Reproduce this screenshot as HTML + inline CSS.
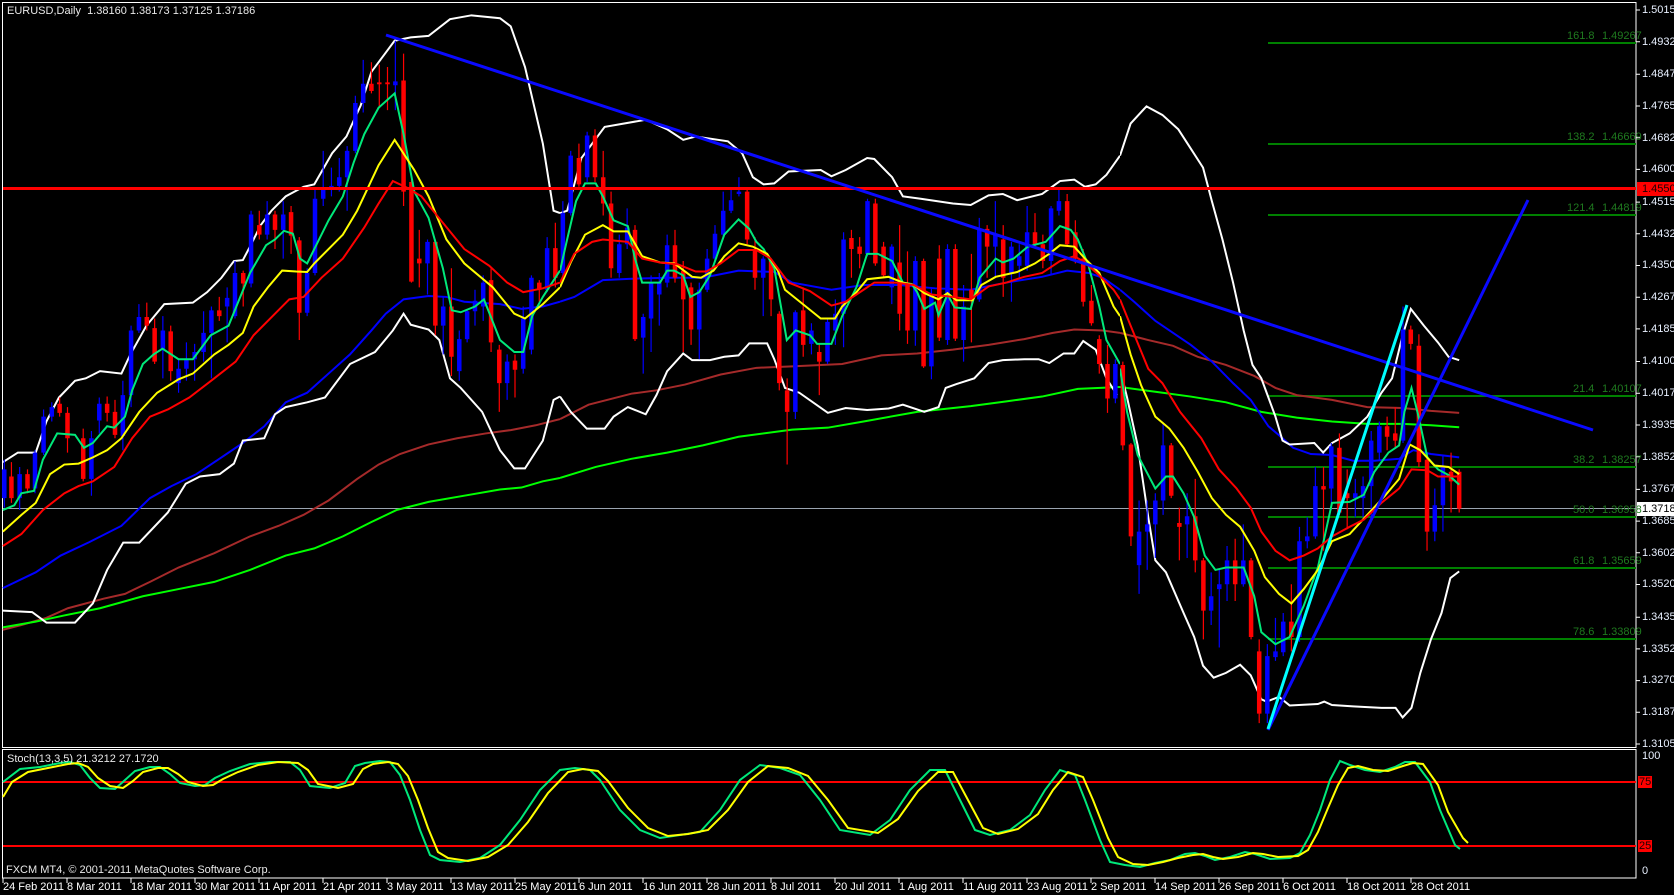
<!DOCTYPE html>
<html><head><meta charset="utf-8"><style>
html,body{margin:0;padding:0;background:#000;width:1674px;height:895px;overflow:hidden}
.t{position:absolute;font-family:"Liberation Sans",sans-serif;font-size:11px;color:#fff;white-space:nowrap;line-height:12px}
.ax{position:absolute;left:1642px;font-family:"Liberation Sans",sans-serif;font-size:11px;color:#e8f0ff;line-height:12px}
.fib{position:absolute;font-family:"Liberation Sans",sans-serif;font-size:11px;color:#1f7a1f;line-height:12px}
.d{position:absolute;top:881px;font-family:"Liberation Sans",sans-serif;font-size:11px;color:#fff;white-space:nowrap;line-height:12px}
</style></head><body>
<svg width="1674" height="895" style="position:absolute;left:0;top:0" xmlns="http://www.w3.org/2000/svg">
<rect width="1674" height="895" fill="#000"/>
<!-- frames -->
<rect x="2.5" y="2.5" width="1633.5" height="745" fill="none" stroke="#fff" stroke-width="1"/>
<rect x="2.5" y="749.5" width="1633.5" height="128.5" fill="none" stroke="#fff" stroke-width="1"/>
<!-- gray current price line -->
<line x1="3" y1="508.5" x2="1636" y2="508.5" stroke="#9aa4b0" stroke-width="1"/>
<!-- fib lines -->
<g stroke="#008000" stroke-width="2">
<line x1="1268" y1="43" x2="1636" y2="43"/><line x1="1268" y1="144" x2="1636" y2="144"/>
<line x1="1268" y1="215" x2="1636" y2="215"/><line x1="1268" y1="396" x2="1636" y2="396"/>
<line x1="1268" y1="467" x2="1636" y2="467"/><line x1="1268" y1="517" x2="1636" y2="517"/>
<line x1="1268" y1="568" x2="1636" y2="568"/><line x1="1268" y1="639" x2="1636" y2="639"/>
</g>

<!-- Panel A -->
<svg x="0" y="0" width="560" height="750" viewBox="0 0 1568 1566" preserveAspectRatio="none">
<g fill="none" vector-effect="non-scaling-stroke">
<path vector-effect="non-scaling-stroke" stroke="#a52a2a" stroke-width="2" fill="none" d="M8 1315L60 1305 130 1290 190 1270 290 1250 350 1240 420 1215 500 1185 600 1155 700 1120 780 1098 850 1075 920 1045 1000 1000 1060 970 1120 948 1200 928 1280 915 1360 905 1430 898 1500 888 1568 875"/>
<path vector-effect="non-scaling-stroke" stroke="#00ff00" stroke-width="2" fill="none" d="M8 1310L100 1298 180 1285 280 1270 400 1245 500 1230 600 1215 700 1190 800 1160 880 1145 960 1120 1040 1090 1110 1065 1200 1048 1300 1035 1400 1022 1460 1018 1520 1005 1568 998"/>
<path vector-effect="non-scaling-stroke" stroke="#0000ff" stroke-width="2" fill="none" d="M8 1228L100 1195 170 1160 250 1132 340 1098 420 1040 480 1015 550 990 610 960 680 925 740 890 800 840 860 820 920 780 980 740 1040 690 1080 655 1130 625 1200 618 1250 620 1300 630 1400 635 1460 645 1520 640 1568 630"/>
<path vector-effect="non-scaling-stroke" stroke="#fff" stroke-width="2" fill="none" d="M8 965L50 945 100 945 130 880 165 830 210 795 240 790 280 775 340 780 365 740 410 680 460 635 540 632 580 610 620 580 655 545 680 543 700 515 730 470 760 440 800 410 850 390 880 385 930 320 970 285 1010 220 1040 150 1080 110 1105 85 1150 78 1200 75 1260 40 1320 32 1400 38 1430 55 1470 140 1520 300 1550 440 1568 445"/>
<path vector-effect="non-scaling-stroke" stroke="#fff" stroke-width="2" fill="none" d="M8 1275L90 1278 130 1300 210 1300 260 1260 300 1190 345 1133 390 1133 470 1070 520 1010 560 995 615 990 655 968 680 920 740 915 770 865 800 850 860 840 910 830 940 800 980 760 1050 735 1100 690 1130 655 1150 678 1200 688 1230 710 1260 790 1290 810 1350 860 1400 940 1440 978 1470 978 1520 920 1550 835 1568 828"/>
</g>
<path vector-effect="non-scaling-stroke" stroke="#0000ff" stroke-width="1.2" d="M12 960V1060M55 975V1065M98 940V1030M122 855V950M145 840V880M256 900V1035M278 830V905M344 795V940M367 680V850M389 635V695M456 660V790M500 750V820M522 715V795M545 718V795M570 650V755M592 640V790M636 600V715M658 545V665M703 440V600M748 420V500M793 420V540M860 560V660M882 395V575M905 315V430M928 350V410M950 330V400M972 305V440M995 200V320M1017 125V235M1107 85V230M1197 500V615M1241 620V740M1286 690V795M1308 645V715M1330 605V680M1353 575V670M1420 740V835M1465 640V780M1488 575V740M1532 495V610"/>
<path vector-effect="non-scaling-stroke" stroke="#0000ff" stroke-width="4.5" d="M12 980V1040M55 990V1040M98 945V1020M122 870V945M145 850V870M256 915V1000M278 843V878M344 825V910M367 690V825M389 662V690M456 690V730M500 770V800M522 752V770M545 735V750M570 695V735M592 648V695M636 622V640M658 570V660M703 448V592M748 448V490M793 448V480M860 570V653M882 415V570M905 395V415M928 388V395M950 370V388M972 315V370M995 215V315M1017 175V215M1107 170V178M1197 505V550M1241 640V680M1286 708V775M1308 650V708M1330 628V650M1353 590V640M1420 755V800M1465 665V770M1488 580V730M1532 518V605"/>
<path vector-effect="non-scaling-stroke" stroke="#ff0000" stroke-width="1.2" d="M32 965V1050M77 980V1030M167 830V870M189 850V945M233 895V1005M300 828V880M322 835V915M411 632V690M433 665V760M478 680V795M614 620V670M681 565V640M726 440V500M770 440V520M815 430V530M838 495V710M1040 130V195M1062 135V225M1085 140V230M1130 112V430M1152 375V590M1174 480V600M1219 500V700M1264 560V785M1375 560V735M1398 720V860M1442 740V830M1510 585V630M1555 465V600"/>
<path vector-effect="non-scaling-stroke" stroke="#ff0000" stroke-width="4.5" d="M32 995V1040M77 990V1020M167 843V862M189 862V915M233 915V1000M300 843V862M322 860V908M411 662V680M433 685V755M478 692V775M614 648V660M681 570V592M726 470V490M770 448V480M815 443V492M838 502V653M1040 175V190M1062 172V176M1085 172V176M1130 168V400M1152 380V588M1174 540V550M1219 505V680M1264 640V745M1375 585V715M1398 730V800M1442 753V772M1510 590V605M1555 518V580"/>
<path vector-effect="non-scaling-stroke" stroke="#00e87a" stroke-width="2" fill="none" d="M8 1065L40 1055 60 1030 95 1025 120 960 160 905 210 908 235 935 260 925 300 890 320 893 350 870 370 815 400 760 430 740 455 728 500 750 540 750 590 700 640 680 700 570 745 512 770 500 795 482 820 488 840 540 860 550 880 520 920 460 960 410 990 340 1020 280 1060 225 1105 195 1130 280 1160 400 1200 455 1240 560 1265 648 1290 652 1330 640 1355 625 1400 710 1440 735 1465 735 1490 660 1520 620 1568 565"/>
<path vector-effect="non-scaling-stroke" stroke="#ffff00" stroke-width="2" fill="none" d="M8 1110L60 1075 100 1050 140 990 180 970 220 968 260 955 300 940 340 915 390 860 440 820 500 792 540 780 600 740 640 720 680 695 710 640 750 600 790 565 830 567 860 568 880 550 920 520 960 490 1000 440 1060 345 1105 292 1160 355 1200 410 1250 500 1300 550 1380 600 1440 655 1470 665 1520 635 1568 600"/>
<path vector-effect="non-scaling-stroke" stroke="#ff0000" stroke-width="2" fill="none" d="M8 1140L60 1115 120 1065 180 1030 220 1015 260 1005 320 975 370 915 420 870 470 855 530 830 600 790 660 755 710 700 770 655 810 625 850 620 900 580 960 540 1020 475 1060 425 1100 378 1140 392 1180 410 1240 465 1300 520 1370 555 1420 590 1465 610 1520 602 1568 590"/>
</svg>

<!-- Panel B -->
<svg x="560" y="0" width="560" height="750" viewBox="0 0 1568 1566" preserveAspectRatio="none">
<path vector-effect="non-scaling-stroke" stroke="#a52a2a" stroke-width="2" fill="none" d="M0 875L80 845 200 822 270 815 350 803 450 782 550 768 650 765 790 760 900 742 1000 738 1100 730 1200 720 1300 708 1380 695 1440 688 1520 690 1568 695"/>
<path vector-effect="non-scaling-stroke" stroke="#00ff00" stroke-width="2" fill="none" d="M0 998L100 975 200 958 300 945 400 930 500 912 650 897 750 893 850 880 1000 860 1150 848 1250 838 1350 828 1450 812 1568 808"/>
<path vector-effect="non-scaling-stroke" stroke="#0000ff" stroke-width="2" fill="none" d="M0 630L40 620 120 585 200 582 300 580 400 580 500 565 600 568 650 590 760 605 850 595 950 595 1050 602 1150 605 1250 590 1350 578 1420 565 1480 570 1520 580 1568 605"/>
<path vector-effect="non-scaling-stroke" stroke="#fff" stroke-width="2" fill="none" d="M0 445L20 440 60 330 125 265 240 250 300 270 345 292 380 285 470 295 510 320 540 370 570 385 600 383 640 358 730 355 760 368 800 355 860 330 880 332 930 370 960 410 1010 415 1100 425 1150 428 1200 408 1240 405 1280 418 1350 405 1400 378 1440 375 1470 390 1500 385 1530 365 1568 325"/>
<path vector-effect="non-scaling-stroke" stroke="#fff" stroke-width="2" fill="none" d="M0 828L30 860 75 895 125 895 150 870 190 850 240 865 270 825 300 775 345 738 370 752 420 752 460 745 500 742 530 717 580 717 600 750 630 810 670 820 750 862 800 852 860 856 920 853 960 845 1020 860 1060 850 1080 810 1110 802 1160 790 1200 758 1240 752 1300 750 1340 750 1370 758 1410 738 1440 738 1465 712 1500 730 1530 790 1560 825"/>
<path vector-effect="non-scaling-stroke" stroke="#0000ff" stroke-width="1.2" d="M8 420V580M30 315V450M76 275V380M166 490V580M188 435V520M233 655V780M255 575V735M278 570V680M300 490V600M390 590V750M412 520V610M434 470V545M457 400V495M479 395V445M501 370V410M569 535V660M659 648V875M704 675V740M749 665V760M771 625V720M794 485V725M861 415V535M929 510V635M995 535V722M1040 600V792M1085 510V720M1130 595V755M1174 455V630M1219 420V580M1264 505V630M1286 510V580M1308 430V565M1375 430V575M1397 395V450M1555 750V842"/>
<path vector-effect="non-scaling-stroke" stroke="#0000ff" stroke-width="4.5" d="M8 445V570M30 325V445M76 283V370M166 510V570M188 475V510M233 662V705M255 590V665M278 590V615M300 512V590M390 605V688M412 540V605M434 488V540M457 440V490M479 418V440M501 400V405M569 540V580M659 652V860M704 690V718M749 672V755M771 655V690M794 500V655M861 420V530M929 515V600M995 545V690M1040 615V765M1085 520V710M1130 640V710M1174 478V625M1219 490V515M1264 515V570M1286 535V555M1308 485V555M1375 435V545M1397 420V440M1555 760V832"/>
<path vector-effect="non-scaling-stroke" stroke="#ff0000" stroke-width="1.2" d="M53 300V390M98 270V380M121 315V450M143 400V580M210 470V712M322 480V590M345 545V735M367 590V720M524 395V510M546 495V605M591 540V660M614 650V815M636 790V970M681 600V745M726 718V825M816 480V580M839 495V560M883 415V555M906 505V580M951 470V690M973 525V718M1018 540V768M1062 512V712M1107 510V712M1152 530V715M1196 470V580M1241 470V620M1330 445V515M1352 490V560M1420 405V515M1443 460V550M1465 520V640M1488 595V680M1510 700V780M1533 720V862"/>
<path vector-effect="non-scaling-stroke" stroke="#ff0000" stroke-width="4.5" d="M53 330V385M98 283V370M121 370V425M143 425V560M210 480V708M322 512V580M345 565V625M367 600V688M524 400V500M546 520V580M591 545V625M614 655V800M636 815V860M681 648V720M726 735V755M816 497V520M839 515V530M883 425V550M906 515V575M951 548V655M973 590V690M1018 545V765M1062 540V705M1107 520V707M1152 605V625M1196 478V515M1241 500V580M1330 485V510M1352 510V545M1420 420V510M1443 485V540M1465 540V630M1488 628V675M1510 708V760M1533 760V832"/>
<path vector-effect="non-scaling-stroke" stroke="#00e87a" stroke-width="2" fill="none" d="M0 565L20 500 45 420 70 383 100 383 120 410 150 460 190 472 210 540 230 590 280 590 300 565 320 565 345 575 365 620 390 610 420 575 460 490 500 458 530 478 550 505 570 520 600 560 635 710 660 690 700 700 720 718 760 718 790 660 830 600 860 530 890 530 930 545 960 590 985 593 1000 610 1020 645 1050 632 1060 658 1085 615 1105 642 1150 645 1175 580 1220 540 1240 548 1270 540 1310 515 1360 505 1400 472 1430 480 1450 500 1480 555 1510 640 1530 710 1568 760"/>
<path vector-effect="non-scaling-stroke" stroke="#ffff00" stroke-width="2" fill="none" d="M0 600L30 548 70 490 120 470 150 483 190 483 230 535 280 548 320 550 370 578 395 580 430 565 460 535 500 508 540 515 580 530 610 565 630 605 680 635 730 665 770 665 790 640 830 610 860 583 920 578 960 590 990 595 1020 612 1060 625 1085 612 1110 627 1155 627 1180 595 1220 578 1280 568 1330 550 1370 530 1400 512 1440 515 1470 540 1510 570 1550 640 1568 660"/>
<path vector-effect="non-scaling-stroke" stroke="#ff0000" stroke-width="2" fill="none" d="M0 590L40 530 90 505 120 500 190 505 230 540 280 548 330 552 380 567 410 567 450 550 500 522 550 522 590 540 640 590 700 608 760 638 800 630 850 605 880 590 940 590 990 595 1040 615 1100 620 1150 625 1200 598 1250 590 1300 578 1350 570 1400 545 1440 535 1470 548 1510 575 1550 605 1568 625"/>
</svg>

<!-- Panel C -->
<svg x="1120" y="0" width="554" height="750" viewBox="0 0 1568 1566" preserveAspectRatio="none">
<path vector-effect="non-scaling-stroke" stroke="#a52a2a" stroke-width="2" fill="none" d="M0 695L80 710 150 722 220 745 300 762 380 785 440 810 500 825 600 835 700 850 800 852 880 858 960 862"/>
<path vector-effect="non-scaling-stroke" stroke="#00ff00" stroke-width="2" fill="none" d="M0 808L100 818 200 828 300 840 400 860 500 872 600 880 700 885 800 885 880 888 960 892"/>
<path vector-effect="non-scaling-stroke" stroke="#0000ff" stroke-width="2" fill="none" d="M0 605L40 630 100 670 140 690 200 720 260 755 320 800 370 835 420 890 460 915 490 935 540 948 600 950 660 962 720 962 790 958 830 940 880 948 960 955"/>
<path vector-effect="non-scaling-stroke" stroke="#fff" stroke-width="2" fill="none" d="M0 325L30 258 75 222 120 240 165 270 200 310 235 350 260 420 290 500 320 590 350 690 375 762 400 790 420 830 440 870 460 920 480 928 550 925 575 945 600 925 650 905 700 870 740 820 770 790 800 700 823 645 860 680 900 715 930 745 960 752"/>
<path vector-effect="non-scaling-stroke" stroke="#fff" stroke-width="2" fill="none" d="M0 770L20 830 50 930 80 1080 100 1170 130 1195 180 1280 210 1330 235 1390 265 1415 300 1405 340 1388 370 1410 400 1460 415 1465 450 1455 480 1473 560 1470 578 1465 600 1472 660 1475 740 1478 780 1478 800 1498 825 1478 850 1405 880 1335 910 1280 935 1207 960 1193"/>
<path vector-effect="non-scaling-stroke" stroke="#0000ff" stroke-width="1.2" d="M54 1045V1240M77 1045V1190M100 1030V1165M122 885V1075M190 1030V1165M258 1195V1305M281 1190V1352M303 1140V1255M349 1095V1225M417 1345V1510M440 1290V1380M462 1280V1370M508 1100V1340M530 1080V1145M553 975V1125M598 925V1065M666 1000V1080M688 995V1080M711 900V1080M734 880V960M801 640V925M891 1020V1130M914 950V1110"/>
<path vector-effect="non-scaling-stroke" stroke="#0000ff" stroke-width="4.5" d="M54 1110V1180M77 1095V1110M100 1045V1095M122 930V1045M190 1078V1095M258 1245V1275M281 1220V1230M303 1170V1220M349 1170V1220M417 1370V1490M440 1360V1372M462 1298V1362M508 1130V1330M530 1120V1130M553 1015V1120M598 932V1020M666 1030V1040M688 1015V1040M711 920V1015M734 890V945M801 688V920M891 1055V1110M914 975V1055"/>
<path vector-effect="non-scaling-stroke" stroke="#ff0000" stroke-width="1.2" d="M8 755V940M31 925V1140M145 925V1040M168 1060V1170M213 1000V1195M236 1165V1335M326 1125V1255M371 1165V1335M394 1335V1510M485 1220V1360M576 975V1150M621 905V1075M643 980V1105M756 870V940M779 850V935M823 680V730M846 698V975M869 955V1150M937 945V1070M960 980V1070"/>
<path vector-effect="non-scaling-stroke" stroke="#ff0000" stroke-width="4.5" d="M8 762V930M31 928V1120M145 930V1035M168 1092V1100M213 1078V1170M236 1170V1275M326 1170V1220M371 1170V1330M394 1360V1490M485 1298V1330M576 1015V1022M621 935V1070M643 1030V1040M756 890V912M779 905V920M823 688V718M846 722V965M869 960V1110M937 985V1005M960 985V1062"/>
<path vector-effect="non-scaling-stroke" stroke="#00e87a" stroke-width="2" fill="none" d="M0 770L20 860 50 950 100 1020 130 995 150 995 180 1030 210 1080 240 1160 270 1190 300 1185 350 1185 380 1245 400 1320 440 1345 480 1330 520 1265 560 1185 600 1050 650 1048 690 1033 720 985 760 945 790 930 805 860 825 810 845 870 870 955 900 980 930 992 960 1012"/>
<path vector-effect="non-scaling-stroke" stroke="#ffff00" stroke-width="2" fill="none" d="M0 660L30 740 60 805 100 870 140 895 180 935 220 985 260 1040 300 1075 340 1100 380 1150 410 1205 450 1240 485 1260 520 1230 560 1190 600 1130 650 1115 700 1075 750 1035 790 1000 820 928 850 940 890 972 930 975 960 990"/>
<path vector-effect="non-scaling-stroke" stroke="#ff0000" stroke-width="2" fill="none" d="M0 625L30 680 80 770 120 800 170 860 230 915 280 980 330 1020 370 1060 400 1110 440 1150 480 1170 520 1160 560 1145 600 1120 650 1100 690 1085 740 1050 790 1020 825 980 870 982 900 995 930 995 960 995"/>
</svg>

<!-- red horizontal line -->
<line x1="3" y1="188.5" x2="1636" y2="188.5" stroke="#ff0000" stroke-width="3"/>
<!-- trendlines -->
<line x1="386" y1="35" x2="1593" y2="430" stroke="#0a0aff" stroke-width="3"/>
<line x1="1268" y1="730" x2="1528" y2="200" stroke="#0a0aff" stroke-width="3"/>
<line x1="1268" y1="729" x2="1407" y2="305" stroke="#00ffff" stroke-width="3"/>

<!-- axis ticks -->
<g stroke="#fff" stroke-width="1">
<path d="M1636 10h4M1636 41.7h4M1636 74.3h4M1636 106h4M1636 137.7h4M1636 169.4h4M1636 202.1h4M1636 233.8h4M1636 265.5h4M1636 297.2h4M1636 328.9h4M1636 361.5h4M1636 393.3h4M1636 425h4M1636 456.7h4M1636 489.4h4M1636 521.1h4M1636 552.8h4M1636 584.5h4M1636 617.2h4M1636 648.9h4M1636 680.6h4M1636 712.3h4M1636 744h4"/>
<path d="M3 878v5M67 878v5M131 878v5M195 878v5M259 878v5M323 878v5M387 878v5M451 878v5M515 878v5M579 878v5M643 878v5M707 878v5M771 878v5M835 878v5M899 878v5M963 878v5M1027 878v5M1091 878v5M1155 878v5M1219 878v5M1283 878v5M1347 878v5M1411 878v5"/>
</g>

<!-- stoch -->
<line x1="3" y1="782" x2="1636" y2="782" stroke="#ff0000" stroke-width="2"/>
<line x1="3" y1="846" x2="1636" y2="846" stroke="#ff0000" stroke-width="2"/>
<polyline fill="none" stroke="#00e87a" stroke-width="2" points="3,782 20,769 40,767 60,763 70,762 80,765 90,778 100,788 115,789 125,780 135,771 150,767 160,767 170,774 180,783 195,786 205,785 215,778 230,771 250,764 270,762 290,762 300,770 310,786 330,788 345,783 355,766 365,763 380,761 390,762 400,775 410,800 420,830 430,855 440,860 460,862 480,858 500,845 520,820 540,790 560,770 575,768 590,770 600,780 620,810 640,830 660,838 680,835 700,832 720,810 740,780 760,765 780,768 800,775 820,800 840,830 870,835 890,820 910,790 930,770 945,770 960,800 975,830 990,835 1010,830 1030,815 1045,790 1060,770 1075,775 1085,800 1100,840 1110,862 1125,865 1140,867 1155,863 1170,860 1185,854 1195,853 1205,856 1215,860 1230,857 1245,852 1255,854 1270,859 1290,858 1300,853 1310,835 1320,810 1330,780 1340,761 1350,765 1365,770 1380,772 1395,767 1405,762 1415,762 1430,782 1440,810 1455,845 1460,849"/>
<polyline fill="none" stroke="#ffff00" stroke-width="2" points="3,797 12,782 28,772 48,768 68,764 78,763 88,767 98,778 110,786 123,788 133,781 143,772 158,768 168,768 178,774 188,782 203,786 213,785 223,779 238,772 258,765 278,762 298,763 308,770 318,784 338,788 353,784 363,769 373,764 388,762 398,764 408,776 418,800 428,828 438,852 448,858 468,861 488,857 508,845 528,822 548,793 568,772 583,769 598,771 608,781 628,808 648,828 668,836 688,834 708,830 728,810 748,782 768,766 788,768 808,776 828,800 848,828 878,833 898,819 918,791 938,772 953,772 968,800 983,828 998,834 1018,829 1038,814 1053,790 1068,772 1083,777 1093,800 1108,838 1118,857 1133,864 1148,865 1163,862 1178,858 1193,855 1203,854 1213,857 1223,859 1238,857 1253,853 1263,854 1278,857 1298,856 1308,850 1318,832 1328,808 1338,785 1348,768 1358,766 1373,770 1388,771 1403,766 1413,763 1423,764 1438,785 1448,812 1463,838 1468,843"/>
<!-- price labels boxes -->
<rect x="1637" y="182" width="37" height="14" fill="#ff0000"/>
<rect x="1637" y="502" width="37" height="14" fill="#fff"/>
<rect x="1638" y="776" width="14" height="12" fill="#ff0000"/>
<rect x="1638" y="840" width="14" height="12" fill="#ff0000"/>
</svg>

<div class="t" style="left:7px;top:5px;color:#e8e8e8">EURUSD,Daily&nbsp;&nbsp;1.38160 1.38173 1.37125 1.37186</div>
<div class="t" style="left:7px;top:753px;color:#e8e8e8">Stoch(13,3,5) 21.3212 27.1720</div>
<div class="t" style="left:6px;top:864px;color:#e8e8e8">FXCM MT4, © 2001-2011 MetaQuotes Software Corp.</div>

<div class="ax" style="top:4px">1.50150</div><div class="ax" style="top:36px">1.49325</div><div class="ax" style="top:68px">1.48475</div><div class="ax" style="top:100px">1.47650</div><div class="ax" style="top:132px">1.46825</div><div class="ax" style="top:163px">1.46000</div>
<div class="ax" style="top:183px;color:#200000">1.45504</div>
<div class="ax" style="top:196px">1.45150</div><div class="ax" style="top:228px">1.44325</div><div class="ax" style="top:259px">1.43500</div><div class="ax" style="top:291px">1.42675</div><div class="ax" style="top:323px">1.41850</div><div class="ax" style="top:355px">1.41000</div><div class="ax" style="top:387px">1.40175</div><div class="ax" style="top:419px">1.39350</div><div class="ax" style="top:451px">1.38525</div><div class="ax" style="top:483px">1.37675</div>
<div class="ax" style="top:503px;color:#000">1.37186</div>
<div class="ax" style="top:515px">1.36850</div><div class="ax" style="top:547px">1.36025</div><div class="ax" style="top:578px">1.35200</div><div class="ax" style="top:611px">1.34350</div><div class="ax" style="top:643px">1.33525</div><div class="ax" style="top:674px">1.32700</div><div class="ax" style="top:706px">1.31875</div><div class="ax" style="top:738px">1.31050</div>
<div class="ax" style="top:750px">100</div>
<div class="ax" style="top:776px;left:1639px;color:#200000">75</div>
<div class="ax" style="top:840px;left:1639px;color:#200000">25</div>
<div class="ax" style="top:865px">0</div>

<div class="fib" style="left:1567px;top:30px">161.8</div><div class="fib" style="left:1602px;top:30px">1.49267</div>
<div class="fib" style="left:1567px;top:131px">138.2</div><div class="fib" style="left:1602px;top:131px">1.46669</div>
<div class="fib" style="left:1567px;top:202px">121.4</div><div class="fib" style="left:1602px;top:202px">1.44819</div>
<div class="fib" style="left:1573px;top:383px">21.4</div><div class="fib" style="left:1602px;top:383px">1.40107</div>
<div class="fib" style="left:1573px;top:454px">38.2</div><div class="fib" style="left:1602px;top:454px">1.38257</div>
<div class="fib" style="left:1573px;top:504px">50.0</div><div class="fib" style="left:1602px;top:504px">1.36958</div>
<div class="fib" style="left:1573px;top:555px">61.8</div><div class="fib" style="left:1602px;top:555px">1.35659</div>
<div class="fib" style="left:1573px;top:626px">78.6</div><div class="fib" style="left:1602px;top:626px">1.33809</div>

<div class="d" style="left:3px">24 Feb 2011</div><div class="d" style="left:67px">8 Mar 2011</div><div class="d" style="left:131px">18 Mar 2011</div><div class="d" style="left:195px">30 Mar 2011</div><div class="d" style="left:259px">11 Apr 2011</div><div class="d" style="left:323px">21 Apr 2011</div><div class="d" style="left:387px">3 May 2011</div><div class="d" style="left:451px">13 May 2011</div><div class="d" style="left:515px">25 May 2011</div><div class="d" style="left:579px">6 Jun 2011</div><div class="d" style="left:643px">16 Jun 2011</div><div class="d" style="left:707px">28 Jun 2011</div><div class="d" style="left:771px">8 Jul 2011</div><div class="d" style="left:835px">20 Jul 2011</div><div class="d" style="left:899px">1 Aug 2011</div><div class="d" style="left:963px">11 Aug 2011</div><div class="d" style="left:1027px">23 Aug 2011</div><div class="d" style="left:1091px">2 Sep 2011</div><div class="d" style="left:1155px">14 Sep 2011</div><div class="d" style="left:1219px">26 Sep 2011</div><div class="d" style="left:1283px">6 Oct 2011</div><div class="d" style="left:1347px">18 Oct 2011</div><div class="d" style="left:1411px">28 Oct 2011</div>
</body></html>
